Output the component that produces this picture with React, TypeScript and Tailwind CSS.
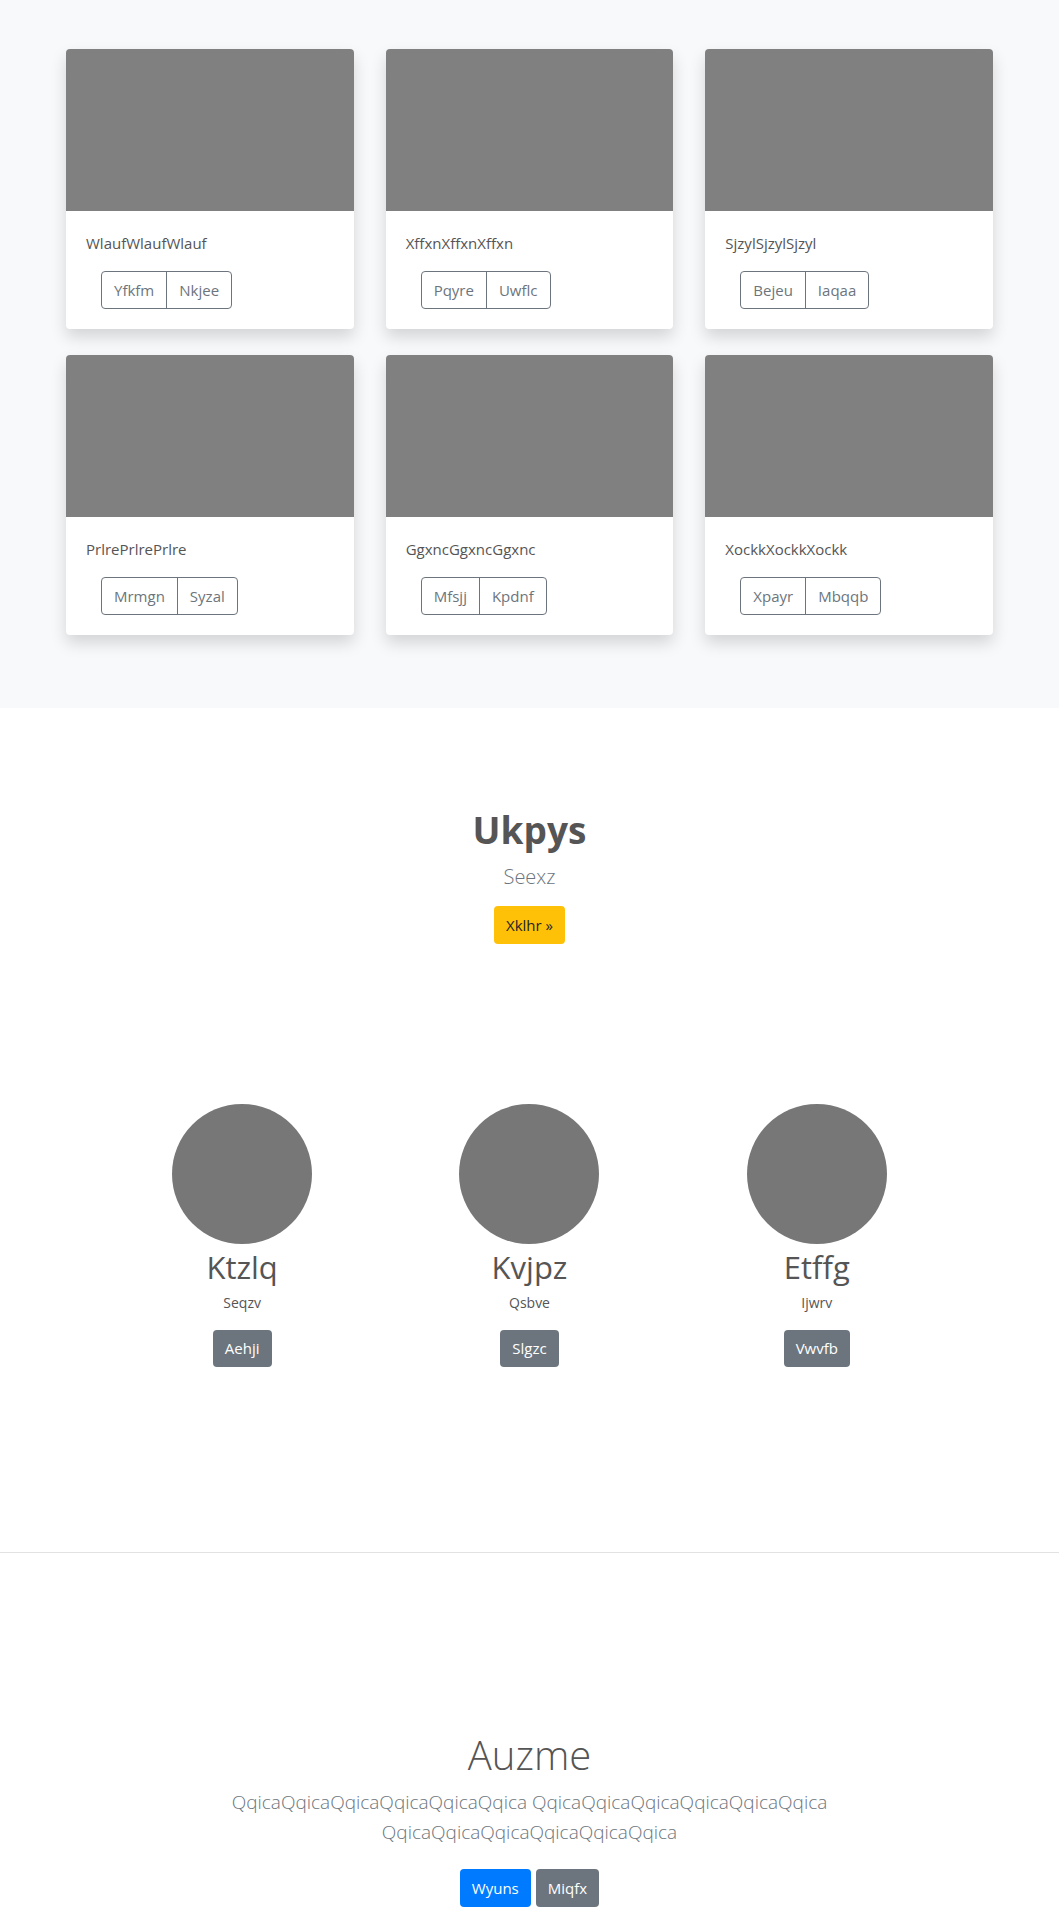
const cards = [
  { title: 'WlaufWlaufWlauf', a: 'Yfkfm', b: 'Nkjee' },
  { title: 'XffxnXffxnXffxn', a: 'Pqyre', b: 'Uwflc' },
  { title: 'SjzylSjzylSjzyl', a: 'Bejeu', b: 'Iaqaa' },
  { title: 'PrlrePrlrePrlre', a: 'Mrmgn', b: 'Syzal' },
  { title: 'GgxncGgxncGgxnc', a: 'Mfsjj', b: 'Kpdnf' },
  { title: 'XockkXockkXockk', a: 'Xpayr', b: 'Mbqqb' },
];

const people = [
  { name: 'Ktzlq', sub: 'Seqzv', btn: 'Aehji' },
  { name: 'Kvjpz', sub: 'Qsbve', btn: 'Slgzc' },
  { name: 'Etffg', sub: 'Ijwrv', btn: 'Vwvfb' },
];

function Card({ title, a, b }: { title: string; a: string; b: string }) {
  return (
    <div className="overflow-hidden rounded bg-white shadow-[0_8px_16px_rgba(0,0,0,0.15)]">
      <div className="h-[162px] bg-[#808080]" />
      <div className="p-5">
        <p className="text-[15px] leading-6 text-[#555]">{title}</p>
        <div className="mt-4 ml-[15px] inline-flex rounded border border-[#6c757d] text-[15px] text-[#6c757d]">
          <button type="button" className="h-[36px] px-3">
            {a}
          </button>
          <button type="button" className="h-[36px] border-l border-[#6c757d] px-3">
            {b}
          </button>
        </div>
      </div>
    </div>
  );
}

export default function App() {
  const para = 'QqicaQqicaQqicaQqicaQqicaQqica';
  return (
    <div className="min-h-[1920px] bg-white font-['Open_Sans','Noto_Sans',sans-serif] text-[#555]">
      <section className="h-[708px] bg-[#f8f9fa] pt-[49px]">
        <div className="mx-auto grid w-[927px] grid-cols-3 gap-x-8 gap-y-[26px]">
          {cards.map((c) => (
            <Card key={c.title} {...c} />
          ))}
        </div>
      </section>

      <section className="pt-[98px] text-center">
        <h1 className="text-[37px] font-bold leading-[48px] text-[#555]">Ukpys</h1>
        <p className="mt-2 text-[20px] font-light leading-[30px] text-[#6c757d]">Seexz</p>
        <button
          type="button"
          className="mt-[14px] h-[38px] rounded bg-[#ffc107] px-3 text-[15px] text-[#212529]"
        >
          Xklhr »
        </button>
      </section>

      <section className="mx-auto mt-[160px] grid w-[862px] grid-cols-3">
        {people.map((p) => (
          <div key={p.name} className="flex flex-col items-center text-center">
            <div className="h-[140px] w-[140px] rounded-full bg-[#777]" />
            <h2 className="mt-1 text-[31px] leading-[38px] text-[#555]">{p.name}</h2>
            <p className="mt-[5px] text-[14px] leading-6 text-[#555]">{p.sub}</p>
            <button
              type="button"
              className="mt-[15px] h-[37px] rounded bg-[#6c757d] px-3 text-[15px] text-white"
            >
              {p.btn}
            </button>
          </div>
        ))}
      </section>

      <hr className="mt-[185px] border-t border-[#e2e2e2]" />

      <section className="pt-[178px] text-center">
        <h2 className="text-[40px] font-light leading-[48px] text-[#555]">Auzme</h2>
        <p className="mx-auto mt-2 max-w-[700px] text-[19px] font-light leading-[30px] text-[#6c757d]">
          {para} {para} {para}
        </p>
        <div className="mt-[22px] flex justify-center gap-[5px]">
          <button type="button" className="h-[38px] rounded bg-[#007bff] px-3 text-[15px] text-white">
            Wyuns
          </button>
          <button type="button" className="h-[38px] rounded bg-[#6c757d] px-3 text-[15px] text-white">
            Miqfx
          </button>
        </div>
      </section>
    </div>
  );
}
